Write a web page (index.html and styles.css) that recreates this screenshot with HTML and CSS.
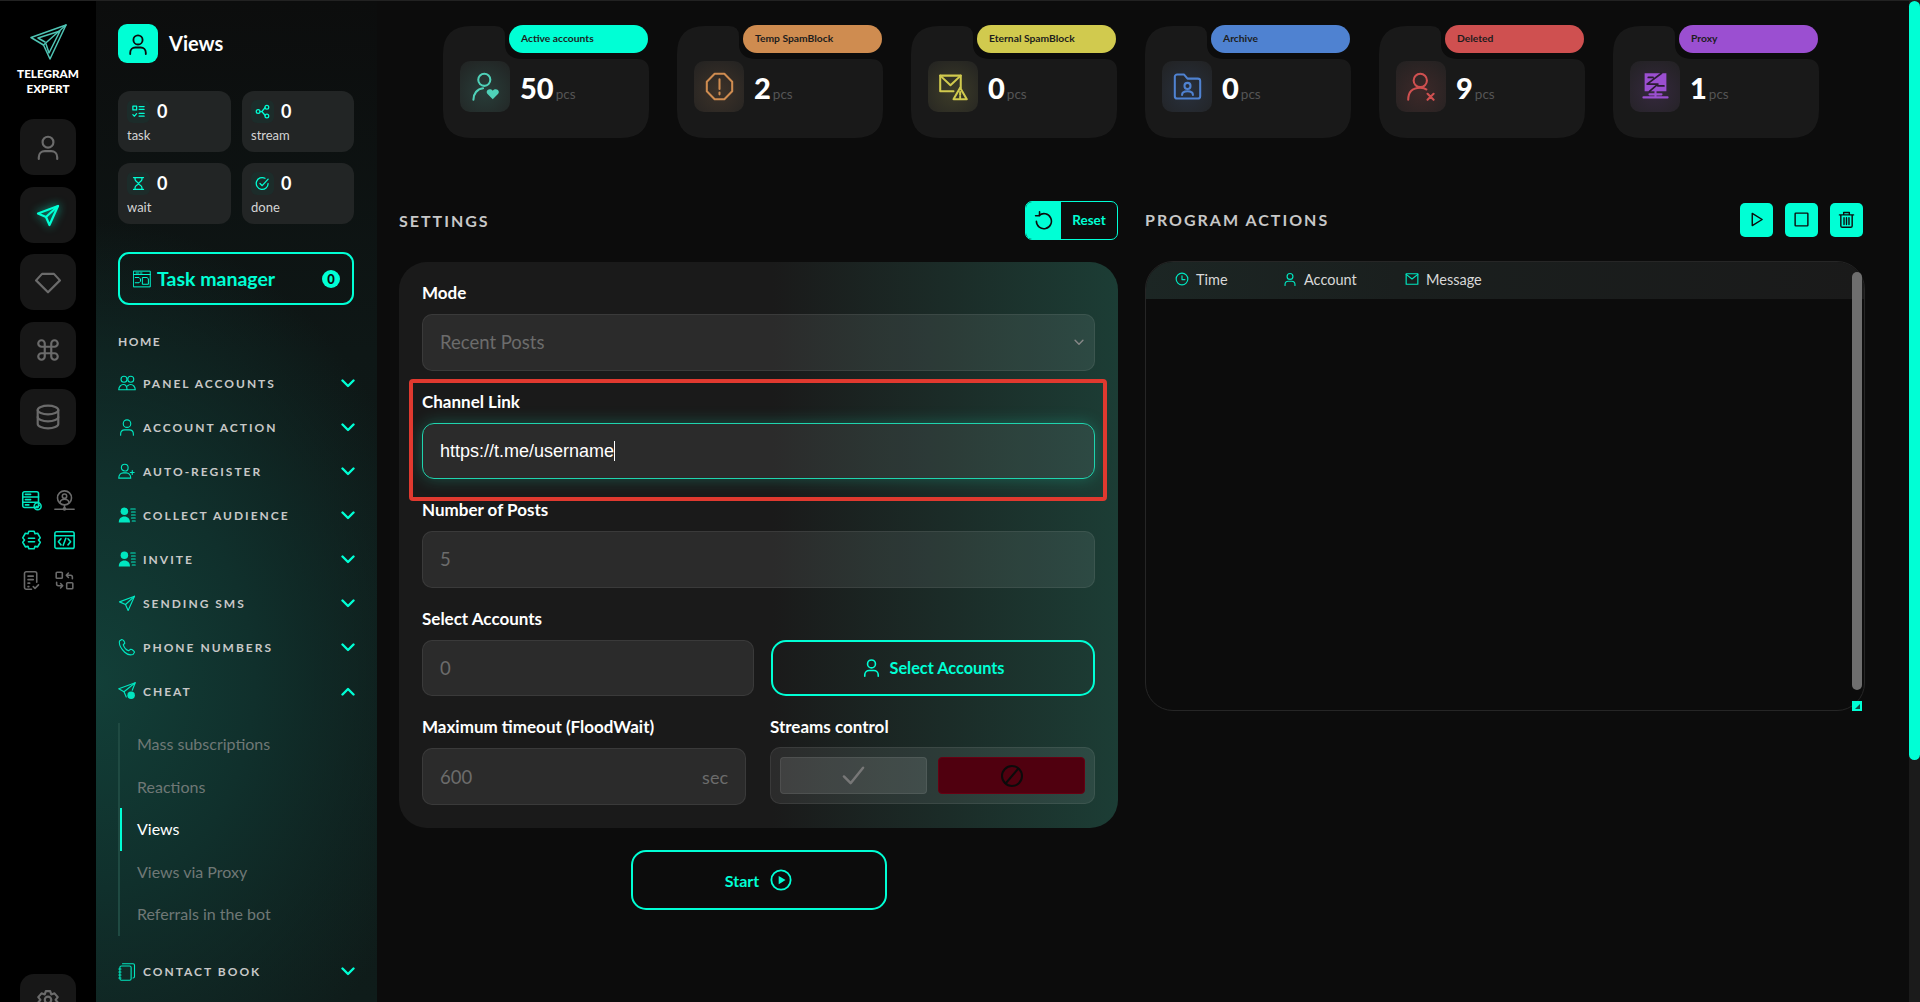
FILE: index.html
```html
<!DOCTYPE html>
<html>
  <head>
    <meta charset="utf-8">
    <title>Views</title>
    <link rel="stylesheet" href="styles.css">
  </head>
  <body>
    <svg class="sprites" xmlns="http://www.w3.org/2000/svg">
      <symbol id="i-user" viewBox="0 0 24 24"><circle cx="12" cy="7.500" r="5"/><path d="M3.500 23v-1.500C3.500 18 6 15.800 9 15.800h6c3 0 5.500 2.200 5.500 5.700V23"/></symbol>
      <symbol id="i-send" viewBox="0 0 24 24"><path d="M22 3 2 10.500l8 3.500 3.500 8L22 3Z"/><path d="M10 14 22 3"/></symbol>
      <symbol id="i-diamond" viewBox="0 0 24 24"><path d="M6.500 4.500h11L23 10.500 12 21.500 1 10.500l5.500-6Z"/></symbol>
      <symbol id="i-cmd" viewBox="0 0 24 24"><path d="M9 9h6v6H9z"/><path d="M9 9H6a3 3 0 1 1 3-3v3ZM15 9V6a3 3 0 1 1 3 3h-3ZM15 15h3a3 3 0 1 1-3 3v-3ZM9 15v3a3 3 0 1 1-3-3h3Z"/></symbol>
      <symbol id="i-db" viewBox="0 0 24 24"><ellipse cx="12" cy="5.500" rx="9.500" ry="4"/><path d="M2.500 5.500v13c0 2.200 4.300 4 9.500 4s9.500-1.800 9.500-4v-13"/><path d="M2.500 12c0 2.200 4.300 4 9.500 4s9.500-1.800 9.500-4"/></symbol>
      <symbol id="i-gear" viewBox="0 0 24 24"><path d="M10 2h4l1 3 3-1 3 3.500-2 2.500 2 2.500-3 4-3-1-1 3h-4l-1-3-3 1-3-4 2-2.500-2-2.500L6 4l3 1 1-3Z"/><circle cx="12" cy="10" r="3"/></symbol>
      <symbol id="i-server" viewBox="0 0 24 24"><rect x="2" y="2" width="18" height="18" rx="2"/><path d="M2 8h18M2 14h18M5 5h6M5 11h6M5 17h4"/><circle cx="19" cy="18.500" r="4"/><path d="m17.300 18.500 1.300 1.300 2.200-2.400"/></symbol>
      <symbol id="i-node" viewBox="0 0 24 24"><circle cx="12" cy="9" r="8"/><circle cx="12" cy="7" r="2.500"/><path d="M7 14c.5-2.500 2.500-3.500 5-3.500s4.500 1 5 3.500M12 17v4M1 22h22"/><circle cx="12" cy="21.500" r="1.200"/></symbol>
      <symbol id="i-cog" viewBox="0 0 24 24"><path d="M9 1.500h6l1 2.800 3-.6 3 5.300-2 2.500 2 2.500-3 5.300-3-.6-1 2.800H9l-1-2.800-3 .6L2 14l2-2.500-2-2.500 3-5.300 3 .6 1-2.800Z"/><path d="M8.500 9.500h7M8.500 13.500h7"/></symbol>
      <symbol id="i-code" viewBox="0 0 24 24"><rect x="1" y="2" width="22" height="19" rx="2"/><path d="M1 6.500h22M8 10 5 13.500 8 17M16 10l3 3.500-3 3.500M13.500 9.500l-3 8"/></symbol>
      <symbol id="i-doc" viewBox="0 0 24 24"><path d="M12 22H6a2 2 0 0 1-2-2V4a2 2 0 0 1 2-2h10a2 2 0 0 1 2 2v10"/><path d="M8 7h6M8 11h6M8 15h2M8 19h1M14 19l2 2 4-4"/></symbol>
      <symbol id="i-swap" viewBox="0 0 24 24"><rect x="2.500" y="2.500" width="7" height="7" rx="1"/><rect x="14.500" y="14.500" width="7" height="7" rx="1"/><path d="M14 6h5c1.500 0 2 1 2 2v2M14 6l2.500-2.500M14 6l2.500 2.500M10 18H5c-1.500 0-2-1-2-2v-2M10 18l-2.500-2.500M10 18l-2.500 2.500"/></symbol>
      <symbol id="i-tasks" viewBox="0 0 24 24"><rect x="3" y="3.500" width="6" height="6"/><path d="M13 4h8M13 8.500h8M13 15h8M13 19.500h8M3 17l2.500 2.500 3.500-4"/></symbol>
      <symbol id="i-share" viewBox="0 0 24 24"><circle cx="5" cy="12" r="3"/><circle cx="19" cy="5" r="3"/><circle cx="19" cy="19" r="3"/><path d="m8 12 3 0 5-6M11 12l5 6"/></symbol>
      <symbol id="i-hour" viewBox="0 0 24 24"><path d="M4 2.500h16M4 21.500h16M6.500 2.500v3c0 3 5.500 4.500 5.500 6.500s-5.500 3.500-5.500 6.500v3M17.500 2.500v3c0 3-5.500 4.500-5.500 6.500s5.500 3.500 5.500 6.500v3"/></symbol>
      <symbol id="i-done" viewBox="0 0 24 24"><path d="M21 12a9.500 9.500 0 1 1-5-8.400"/><path d="m8 12 3.500 3.500L21 5"/></symbol>
      <symbol id="i-taskboard" viewBox="0 0 24 24"><rect x="1" y="1.500" width="22" height="21"/><path d="M1 6h22M4 4h4M10 4h2M3 10h5l2 2v3l-2 2H3M13 10h6l1.500 2v7H13Z"/></symbol>
      <symbol id="i-group" viewBox="0 0 24 24"><circle cx="8" cy="7" r="4"/><circle cx="17" cy="7" r="4"/><path d="M1 21c0-4 3-7 6-7 3 0 5 2 5 7H1ZM12 21h11c0-4-3-7-6-7-2 0-3.500 1-4.500 2"/></symbol>
      <symbol id="i-add" viewBox="0 0 24 24"><circle cx="9" cy="7.500" r="4.500"/><path d="M1 21.500c0-4.500 3-7 6-7h4c3 0 6 2.500 6 7H1ZM19 11.500v5M16.500 14h5"/></symbol>
      <symbol id="i-list" viewBox="0 0 24 24"><circle class="solid" cx="8.500" cy="7" r="5"/><path class="solid" d="M1 22c0-5 3-8 7.500-8s7.500 3 7.500 8H1Z"/><path d="M17 4h6M18 8h5M18 12h5M18 16h5M19 20h4"/></symbol>
      <symbol id="i-phone" viewBox="0 0 24 24"><path d="M5 2 2 4c-1 5 3 11 7 15 3 3 7 4 11 3l2-3c0-1-3-4-5-4l-3 2c-3-1-6-5-7-8l2-2c0-2-2-5-4-5Z"/></symbol>
      <symbol id="i-cheat" viewBox="0 0 24 24"><path d="M23 1 1 9l7 4 3 7"/><path d="M23 1 8 13M23 1l-4 10"/><circle class="solid" cx="17.500" cy="17.500" r="5"/></symbol>
      <symbol id="i-book" viewBox="0 0 24 24"><rect x="2.500" y="4" width="15" height="19" rx="2"/><path d="M6 1h14a2 2 0 0 1 2 2v15a2 2 0 0 1-2 2M1 8h3M1 12h3M1 16h3M1 20h3"/></symbol>
      <symbol id="i-chev" viewBox="0 0 14 9"><path d="M1.500 1.500 7 7l5.500-5.500"/></symbol>
      <symbol id="i-heart" viewBox="0 0 24 24"><circle cx="11" cy="6.500" r="5"/><path d="M2 23c0-5 3-9 8-9.500"/><path class="solid" d="M18 22.500l-4.500-4.500c-2-2.500 2-5.500 4.500-2.500 2.500-3 6.500 0 4.500 2.500L18 22.500Z"/></symbol>
      <symbol id="i-warn" viewBox="0 0 24 24"><path d="M8 1.500h8l6.500 6.500v8L16 22.500H8L1.500 16V8L8 1.500Z"/><path d="M12 6v8M12 17v1.500"/></symbol>
      <symbol id="i-mail" viewBox="0 0 24 24"><path d="M18 13V3H1v13h11"/><path d="m1 3 8.500 8L18 3"/><path d="M17.500 13 12 22.500h11L17.500 13ZM17.500 16.500v2.500M17.500 20.500v.5"/></symbol>
      <symbol id="i-folder" viewBox="0 0 24 24"><path d="M1.500 4a2 2 0 0 1 2-2H9l3 3.500h8.500a2 2 0 0 1 2 2V20a2 2 0 0 1-2 2h-17a2 2 0 0 1-2-2V4Z"/><circle cx="12" cy="11.500" r="2.500"/><path d="M7.500 19c0-2 2-3 4.500-3s4.500 1 4.500 3"/></symbol>
      <symbol id="i-userx" viewBox="0 0 24 24"><circle cx="11" cy="7" r="5.500"/><path d="M1 23c0-6 3-10 10-10 2 0 4 .5 5 1.500M17 18l5 5M22 18l-5 5"/></symbol>
      <symbol id="i-proxy" viewBox="0 0 24 24"><path class="solid" d="M3 1h18v15H3V1Z"/><path class="cut" d="M6 4.500h4M14 11.500h5M17 1 5 10h9L7 16"/><path d="M2 21h20M12 16v5M7 18.500h10"/></symbol>
      <symbol id="i-reset" viewBox="0 0 24 24"><path d="M6.500 5.500A9.500 9.500 0 1 1 3 13"/><path d="M7 1v5H2"/></symbol>
      <symbol id="i-play" viewBox="0 0 24 24"><path d="M6 3.500v17L20 12 6 3.500Z"/></symbol>
      <symbol id="i-stop" viewBox="0 0 24 24"><rect x="3" y="3" width="18" height="18" rx="1"/></symbol>
      <symbol id="i-trash" viewBox="0 0 24 24"><path d="M2 5.500h20M8 5.500V2h8v3.500M4 5.500V21a2 2 0 0 0 2 2h12a2 2 0 0 0 2-2V5.500M8.500 9.500V19M12 9.500V19M15.500 9.500V19"/></symbol>
      <symbol id="i-clock" viewBox="0 0 24 24"><circle cx="12" cy="12" r="10"/><path d="M12 6.500V13h5"/></symbol>
      <symbol id="i-envelope" viewBox="0 0 24 24"><rect x="2" y="3" width="20" height="18"/><path d="m2 4 10 8 10-8"/></symbol>
      <symbol id="i-ban" viewBox="0 0 24 24"><circle cx="12" cy="12" r="10"/><path d="M18 5 6 19"/></symbol>
      <symbol id="i-check" viewBox="0 0 24 24"><path d="M2 13l7 7L22 4"/></symbol>
      <symbol id="i-start" viewBox="0 0 24 24"><circle cx="12" cy="12" r="10.500"/><path class="solid" d="M9.500 7.500v9L17 12 9.500 7.500Z"/></symbol>
    </svg>

    <aside class="rail">
      <div class="logo">
        <svg class="logo-mark" viewBox="0 0 38 36"><path d="M37 1 2 13.500 14.500 21 21 35 37 1Z"/><path d="M37 1 14.500 21"/><path d="M31 7 9 14l7 4M31 7 20 29l-3-9"/></svg>
        <div class="logo-text">TELEGRAM<br>EXPERT</div>
      </div>
      <a class="rail-btn"><svg class="icon"><use href="#i-user"/></svg></a>
      <a class="rail-btn is-active"><svg class="icon"><use href="#i-send"/></svg></a>
      <a class="rail-btn"><svg class="icon"><use href="#i-diamond"/></svg></a>
      <a class="rail-btn"><svg class="icon"><use href="#i-cmd"/></svg></a>
      <a class="rail-btn"><svg class="icon"><use href="#i-db"/></svg></a>
      <div class="rail-tools">
        <svg class="tool is-on"><use href="#i-server"/></svg>
        <svg class="tool"><use href="#i-node"/></svg>
        <svg class="tool is-on"><use href="#i-cog"/></svg>
        <svg class="tool is-on"><use href="#i-code"/></svg>
        <svg class="tool"><use href="#i-doc"/></svg>
        <svg class="tool"><use href="#i-swap"/></svg>
      </div>
      <a class="rail-btn rail-bottom"><svg class="icon"><use href="#i-gear"/></svg></a>
    </aside>

    <nav class="sidebar">
      <div class="page-head">
        <span class="page-icon"><svg><use href="#i-user"/></svg></span>
        <h1>Views</h1>
      </div>
      <div class="tiles">
        <div class="tile"><div class="tile-top"><span class="tile-icon"><svg><use href="#i-tasks"/></svg></span><b>0</b></div><span class="tile-label">task</span></div>
        <div class="tile"><div class="tile-top"><span class="tile-icon"><svg><use href="#i-share"/></svg></span><b>0</b></div><span class="tile-label">stream</span></div>
        <div class="tile"><div class="tile-top"><span class="tile-icon"><svg><use href="#i-hour"/></svg></span><b>0</b></div><span class="tile-label">wait</span></div>
        <div class="tile"><div class="tile-top"><span class="tile-icon"><svg><use href="#i-done"/></svg></span><b>0</b></div><span class="tile-label">done</span></div>
      </div>
      <a class="task-manager">
        <svg class="tm-icon"><use href="#i-taskboard"/></svg>
        <span>Task manager</span>
        <i class="tm-count">0</i>
      </a>
      <div class="home">HOME</div>
      <ul class="menu">
        <li class="menu-row"><svg class="menu-icon"><use href="#i-group"/></svg><span>PANEL ACCOUNTS</span><svg class="chev"><use href="#i-chev"/></svg></li>
        <li class="menu-row"><svg class="menu-icon"><use href="#i-user"/></svg><span>ACCOUNT ACTION</span><svg class="chev"><use href="#i-chev"/></svg></li>
        <li class="menu-row"><svg class="menu-icon"><use href="#i-add"/></svg><span>AUTO-REGISTER</span><svg class="chev"><use href="#i-chev"/></svg></li>
        <li class="menu-row"><svg class="menu-icon"><use href="#i-list"/></svg><span>COLLECT AUDIENCE</span><svg class="chev"><use href="#i-chev"/></svg></li>
        <li class="menu-row"><svg class="menu-icon"><use href="#i-list"/></svg><span>INVITE</span><svg class="chev"><use href="#i-chev"/></svg></li>
        <li class="menu-row"><svg class="menu-icon"><use href="#i-send"/></svg><span>SENDING SMS</span><svg class="chev"><use href="#i-chev"/></svg></li>
        <li class="menu-row"><svg class="menu-icon"><use href="#i-phone"/></svg><span>PHONE NUMBERS</span><svg class="chev"><use href="#i-chev"/></svg></li>
        <li class="menu-row"><svg class="menu-icon"><use href="#i-cheat"/></svg><span>CHEAT</span><svg class="chev is-open"><use href="#i-chev"/></svg></li>
        <li>
          <ul class="submenu">
            <li>Mass subscriptions</li>
            <li>Reactions</li>
            <li class="is-current">Views</li>
            <li>Views via Proxy</li>
            <li>Referrals in the bot</li>
          </ul>
        </li>
        <li class="menu-row"><svg class="menu-icon"><use href="#i-book"/></svg><span>CONTACT BOOK</span><svg class="chev"><use href="#i-chev"/></svg></li>
      </ul>
    </nav>

    <main class="main">
      <section class="stats">
        <div class="stat c-green"><div class="stat-bg"></div><span class="stat-tag">Active accounts</span><div class="stat-body"><span class="stat-icon"><svg><use href="#i-heart"/></svg></span><b>50</b><small>pcs</small></div></div>
        <div class="stat c-orange"><div class="stat-bg"></div><span class="stat-tag">Temp SpamBlock</span><div class="stat-body"><span class="stat-icon"><svg><use href="#i-warn"/></svg></span><b>2</b><small>pcs</small></div></div>
        <div class="stat c-yellow"><div class="stat-bg"></div><span class="stat-tag">Eternal SpamBlock</span><div class="stat-body"><span class="stat-icon"><svg><use href="#i-mail"/></svg></span><b>0</b><small>pcs</small></div></div>
        <div class="stat c-blue"><div class="stat-bg"></div><span class="stat-tag">Archive</span><div class="stat-body"><span class="stat-icon"><svg><use href="#i-folder"/></svg></span><b>0</b><small>pcs</small></div></div>
        <div class="stat c-red"><div class="stat-bg"></div><span class="stat-tag">Deleted</span><div class="stat-body"><span class="stat-icon"><svg><use href="#i-userx"/></svg></span><b>9</b><small>pcs</small></div></div>
        <div class="stat c-purple"><div class="stat-bg"></div><span class="stat-tag">Proxy</span><div class="stat-body"><span class="stat-icon"><svg><use href="#i-proxy"/></svg></span><b>1</b><small>pcs</small></div></div>
      </section>

      <div class="columns">
        <section class="settings">
          <header class="col-head">
            <h2>SETTINGS</h2>
            <a class="reset"><span class="reset-icon"><svg><use href="#i-reset"/></svg></span><span class="reset-text">Reset</span></a>
          </header>
          <div class="panel">
            <div class="annotation"></div>
            <label>Mode</label>
            <div class="field field-select"><span>Recent Posts</span><svg class="select-chev"><use href="#i-chev"/></svg></div>
            <label>Channel Link</label>
            <div class="field field-focus"><span class="typed">https://t.me/username</span></div>
            <label>Number of Posts</label>
            <div class="field"><span>5</span></div>
            <label>Select Accounts</label>
            <div class="pair pair-accounts">
              <div class="field"><span>0</span></div>
              <a class="select-btn"><svg><use href="#i-user"/></svg>Select Accounts</a>
            </div>
            <div class="pair pair-last">
              <div class="pair-col">
                <label>Maximum timeout (FloodWait)</label>
                <div class="field field-unit"><span>600</span><em>sec</em></div>
              </div>
              <div class="pair-col">
                <label>Streams control</label>
                <div class="streams">
                  <span class="stream-on"><svg><use href="#i-check"/></svg></span>
                  <span class="stream-off"><svg><use href="#i-ban"/></svg></span>
                </div>
              </div>
            </div>
          </div>
          <a class="start">Start <svg><use href="#i-start"/></svg></a>
        </section>

        <section class="actions">
          <header class="col-head">
            <h2>PROGRAM ACTIONS</h2>
            <div class="action-btns">
              <a><svg><use href="#i-play"/></svg></a>
              <a><svg><use href="#i-stop"/></svg></a>
              <a><svg><use href="#i-trash"/></svg></a>
            </div>
          </header>
          <div class="log">
            <div class="log-head">
              <span class="log-col col-time"><svg><use href="#i-clock"/></svg>Time</span>
              <span class="log-col col-account"><svg><use href="#i-user"/></svg>Account</span>
              <span class="log-col"><svg><use href="#i-envelope"/></svg>Message</span>
            </div>
            <div class="log-scroll"></div>
            <div class="log-resize"></div>
          </div>
        </section>
      </div>
    </main>

    <div class="page-scroll"><div class="page-thumb"></div></div>
  </body>
</html>
```

FILE: styles.css
```css
* {
    box-sizing: border-box;
}
html, body {
    height: 100%;
}
body {
    margin: 0;
    height: 1002px;
    overflow: hidden;
    display: flex;
    background: #0c0c0c;
    border-top: 1px solid #222;
    font-family: "Lato", sans-serif;
    color: #fff;
}
ul {
    list-style: none;
    margin: 0;
    padding: 0;
}
.sprites {
    display: none;
}
svg {
    fill: none;
    stroke: currentColor;
    stroke-width: 2;
    stroke-linecap: round;
    stroke-linejoin: round;
    overflow: visible;
}
.solid {
    fill: currentColor;
    stroke: none;
}
.cut {
    stroke: #2a1c33;
    stroke-width: 1.400;
}

/* left rail */
.rail {
    width: 96px;
    flex: none;
    overflow: hidden;
    background: #000;
    display: flex;
    flex-direction: column;
    align-items: center;
    padding-top: 23px;
}
.logo {
    flex: none;
    text-align: center;
    height: 95px;
}
.logo-mark {
    width: 38px;
    height: 36px;
    display: block;
    margin: 0 auto 6px;
    color: #4fc4b4;
    stroke-width: 1.500;
}
.logo-text {
    font-size: 11.700px;
    line-height: 15px;
    font-weight: 900;
}
.rail-btn {
    width: 56px;
    height: 56px;
    flex: none;
    margin-bottom: 11.500px;
    border-radius: 14px;
    background: #171717;
    color: #6b6b6b;
    display: flex;
    align-items: center;
    justify-content: center;
}
.rail-btn .icon {
    width: 26px;
    height: 26px;
}
.rail-btn.is-active {
    color: #00ffd5;
}
.rail-btn.is-active .icon {
    width: 24px;
    height: 24px;
    stroke-width: 2.200;
    filter: drop-shadow(0 0 5px rgba(0, 255, 213, .7));
}
.rail-tools {
    flex: none;
    display: grid;
    grid-template-columns: 21px 22px;
    column-gap: 12px;
    row-gap: 19px;
    margin-top: 33px;
}
.tool {
    width: 21px;
    height: 21px;
    color: #6b6b6b;
    stroke-width: 1.800;
}
.tool.is-on {
    color: #00e6c0;
}
.rail-bottom {
    margin-top: 383px;
}

/* sidebar */
.sidebar {
    width: 281px;
    flex: none;
    padding: 23px 23px 0 22px;
    background:
        radial-gradient(ellipse 125% 46% at 0% 68%, #123f38 0%, #10302c 45%, rgba(15, 28, 26, 0) 100%),
        linear-gradient(180deg, #0c0d0d 0%, #0e1716 35%, #0f1c1a 100%);
}
.page-head {
    display: flex;
    align-items: center;
    gap: 11px;
}
.page-icon {
    width: 40px;
    height: 39px;
    border-radius: 9px;
    background: #00ffd5;
    color: #0c0c0c;
    display: flex;
    align-items: center;
    justify-content: center;
}
.page-icon svg {
    width: 22px;
    height: 22px;
}
h1 {
    margin: 0 0 2px;
    font-size: 20px;
    font-weight: 700;
}
.tiles {
    display: grid;
    grid-template-columns: 113px 112px;
    gap: 11px;
    margin-top: 28px;
}
.tile {
    height: 61px;
    border-radius: 12px;
    background: #222525;
    padding: 9px;
}
.tile-top {
    display: flex;
    align-items: center;
    gap: 7px;
    height: 23px;
}
.tile-top b {
    margin-top: -2px;
    font-size: 18px;
    font-weight: 700;
}
.tile-icon {
    width: 23px;
    height: 23px;
    border-radius: 6px;
    background: #1c2c2a;
    color: #00ffd5;
    display: flex;
    align-items: center;
    justify-content: center;
}
.tile-icon svg {
    width: 15px;
    height: 15px;
    stroke-width: 2;
}
.tile-label {
    display: block;
    margin-top: 4px;
    font-size: 13px;
    line-height: 17px;
    color: #d4d4d4;
}
.task-manager {
    display: flex;
    align-items: center;
    height: 53px;
    margin-top: 28px;
    padding: 0 12px 0 13px;
    border: 2px solid #00ffd5;
    border-radius: 11px;
    color: #00ffd5;
    font-size: 19.500px;
    font-weight: 700;
}
.tm-icon {
    width: 18px;
    height: 18px;
    margin-right: 6px;
    stroke-width: 1.300;
}
.tm-count {
    margin-left: auto;
    width: 18px;
    height: 18px;
    border-radius: 50%;
    background: #00ffd5;
    color: #0c0c0c;
    font-size: 13px;
    font-style: normal;
    font-weight: 900;
    line-height: 18px;
    text-align: center;
}
.home {
    margin-top: 25px;
    line-height: 24px;
    font-size: 12px;
    font-weight: 700;
    letter-spacing: 1.500px;
    color: #c8c8c8;
}
.menu {
    margin-top: 7px;
}
.menu-row {
    height: 44px;
    display: flex;
    align-items: center;
    font-size: 12px;
    font-weight: 700;
    letter-spacing: 2px;
    color: #c8c8c8;
}
.menu-icon {
    width: 18px;
    height: 18px;
    margin-right: 7px;
    color: #00e6c0;
    stroke-width: 1.500;
}
.chev {
    width: 14px;
    height: 9px;
    margin: 0 -1px 0 auto;
    color: #00ffd5;
    stroke-width: 2.400;
}
.chev.is-open {
    transform: rotate(180deg);
}
.submenu {
    margin: 10px 0 14px;
    border-left: 2px solid #1f4a42;
    font-size: 16px;
    color: #6f7876;
}
.submenu li {
    height: 42.600px;
    line-height: 42.600px;
    padding-left: 17px;
    position: relative;
}
.submenu .is-current {
    color: #fff;
}
.submenu .is-current::before {
    content: "";
    position: absolute;
    left: 0;
    top: 0;
    bottom: 0;
    width: 2px;
    background: #00ffd5;
}

/* main area */
.main {
    flex: 1;
    min-width: 0;
    padding: 25px 0 0 22px;
}
.stats {
    display: flex;
    gap: 28px;
    padding-left: 44px;
}
.stat {
    --c: #00ffd5;
    --ic: #4fd1b8;
    position: relative;
    width: 206px;
    height: 112px;
    flex: none;
}
.stat-bg {
    position: absolute;
    inset: 0;
    background: #191919;
    clip-path: path("M28 0H52Q62 0 62 10V18Q62 33 80 33H194Q206 33 206 45V84Q206 112 178 112H28Q0 112 0 84V28Q0 0 28 0Z");
}
.c-orange { --c: #cf8c50; --ic: #cf8c50; }
.c-yellow { --c: #d1ca4e; --ic: #d1ca4e; }
.c-blue { --c: #4f82d1; --ic: #4f82d1; }
.c-red { --c: #cf5050; --ic: #cf5050; }
.c-purple { --c: #9b4fd1; --ic: #9b4fd1; }
.stat-tag {
    position: absolute;
    left: 66px;
    right: 1px;
    top: -1px;
    height: 28px;
    border-radius: 14px;
    background: var(--c);
    color: #1d1d1d;
    font-size: 10.300px;
    font-weight: 700;
    line-height: 26px;
    padding-left: 12px;
}
.stat-body {
    position: relative;
    display: flex;
    align-items: center;
    padding: 35px 0 0 17px;
}
.stat-icon {
    position: relative;
    width: 50px;
    height: 51px;
    margin-right: 10px;
    border-radius: 10px;
    background: #212121;
    overflow: hidden;
    color: var(--ic);
    display: flex;
    align-items: center;
    justify-content: center;
}
.stat-icon::before {
    content: "";
    position: absolute;
    inset: 0;
    background: radial-gradient(circle at 50% 60%, var(--ic), transparent 105%);
    opacity: .16;
}
.stat-icon svg {
    position: relative;
    width: 29px;
    height: 29px;
    stroke-width: 1.700;
}
.stat-body b {
    margin-top: 2px;
    font-size: 29px;
    font-weight: 900;
}
.stat-body small {
    margin: 14px 0 0 2px;
    font-size: 13.500px;
    color: #555;
}
.columns {
    display: flex;
    gap: 27px;
    margin-top: 63px;
}
.settings {
    width: 719px;
    flex: none;
}
.actions {
    width: 720px;
    flex: none;
}
.col-head {
    height: 39px;
    margin-bottom: 22px;
    display: flex;
    align-items: center;
    justify-content: space-between;
}
.actions .col-head {
    margin-bottom: 21px;
}
.actions h2 {
    margin-top: -2px;
}
h2 {
    margin: 0;
    font-size: 16px;
    font-weight: 700;
    letter-spacing: 2px;
    color: #c8c8c8;
}
.reset {
    display: flex;
    width: 93px;
    height: 39px;
    border: 1px solid #00ffd5;
    border-radius: 7px;
    overflow: hidden;
}
.reset-icon {
    width: 35px;
    background: #00ffd5;
    color: #0c0c0c;
    display: flex;
    align-items: center;
    justify-content: center;
}
.reset-icon svg {
    width: 19px;
    height: 19px;
}
.reset-text {
    flex: 1;
    text-align: center;
    font-size: 13.500px;
    font-weight: 700;
    line-height: 37px;
    color: #00ffd5;
}
.panel {
    position: relative;
    height: 566px;
    padding: 20px 23px;
    border-radius: 28px;
    background: linear-gradient(90deg, #1a1a1a 0%, #1a1a1a 52%, #1c3d35 100%);
}
.annotation {
    position: absolute;
    left: 10px;
    top: 117px;
    width: 698px;
    height: 122px;
    border: 4px solid #e0392f;
    border-radius: 4px;
    pointer-events: none;
}
label {
    display: block;
    height: 22px;
    line-height: 22px;
    margin-bottom: 10px;
    font-size: 17px;
    font-weight: 700;
}
.field {
    height: 56.600px;
    margin-bottom: 20px;
    padding: 0 17px;
    display: flex;
    align-items: center;
    border: 1px solid rgba(255, 255, 255, .07);
    border-radius: 10px;
    background: rgba(255, 255, 255, .08);
    font-size: 18.500px;
    color: #6c6c6c;
}
.field-select {
    justify-content: space-between;
}
.select-chev {
    width: 10px;
    height: 7px;
    margin-right: -7px;
    color: #888;
}
.field-focus {
    border: 1px solid #1fd4ae;
    border-radius: 12px;
    box-shadow: 0 0 16px rgba(31, 212, 174, .3);
    color: #fff;
}
.typed {
    font-family: "Liberation Sans", sans-serif;
    font-size: 18px;
    border-right: 1px solid #fff;
    line-height: 20px;
}
.pair {
    display: flex;
    justify-content: space-between;
}
.pair-accounts .field {
    width: 332px;
}
.select-btn {
    width: 324px;
    height: 56.600px;
    padding-bottom: 2px;
    border: 2px solid #00ffd5;
    border-radius: 15px;
    color: #00ffd5;
    font-size: 16.300px;
    font-weight: 700;
    display: flex;
    align-items: center;
    justify-content: center;
    gap: 9px;
}
.select-btn svg {
    width: 19px;
    height: 19px;
}
.pair-col {
    width: 324px;
}
.pair-col + .pair-col {
    width: 325px;
}
.pair-last .field {
    margin-bottom: 0;
}
.field-unit {
    justify-content: space-between;
}
.field-unit em {
    font-style: normal;
    font-size: 18px;
}
.streams {
    height: 57px;
    margin-top: -1px;
    padding: 9px 9px;
    display: flex;
    gap: 11px;
    border: 1px solid rgba(255, 255, 255, .07);
    border-radius: 10px;
    background: rgba(255, 255, 255, .08);
}
.streams span {
    flex: 1;
    border-radius: 4px;
    display: flex;
    align-items: center;
    justify-content: center;
}
.stream-on {
    background: rgba(255, 255, 255, .1);
    border: 1px solid rgba(255, 255, 255, .08);
    color: #777;
}
.stream-on svg {
    width: 23px;
    height: 23px;
    stroke-width: 2.600;
}
.stream-off {
    background: #50000f;
    border: 1px solid #660012;
    color: #0b0b0b;
}
.stream-off svg {
    width: 24px;
    height: 24px;
}
.start {
    width: 256px;
    height: 60px;
    margin: 22px auto 0;
    border: 2px solid #00ffd5;
    border-radius: 15px;
    color: #00ffd5;
    font-size: 16px;
    font-weight: 700;
    display: flex;
    align-items: center;
    justify-content: center;
    gap: 11px;
}
.start svg {
    width: 22px;
    height: 22px;
}
.action-btns {
    display: flex;
    gap: 12px;
    margin: -2px 2px 0 0;
}
.action-btns a {
    width: 33px;
    height: 34px;
    border-radius: 5px;
    background: #00ffd5;
    color: #0c0c0c;
    display: flex;
    align-items: center;
    justify-content: center;
}
.action-btns svg {
    width: 17px;
    height: 17px;
}
.log {
    position: relative;
    height: 450px;
    border: 1px solid #262626;
    border-radius: 28px;
}
.log-head {
    height: 37px;
    padding: 0 0 3px 29px;
    display: flex;
    align-items: center;
    border-radius: 27px 27px 0 0;
    background: linear-gradient(90deg, #1c2624 0%, #1a1f1e 35%, #1a1a1a 100%);
    font-size: 14.500px;
    color: #d8d8d8;
}
.log-col {
    display: flex;
    align-items: center;
    gap: 7px;
}
.log-col svg {
    width: 14px;
    height: 14px;
    color: #00e6c0;
    stroke-width: 2;
}
.col-time {
    width: 108px;
}
.col-account {
    width: 122px;
}
.log-scroll {
    position: absolute;
    right: 2px;
    top: 10px;
    width: 10px;
    height: 418px;
    border-radius: 5px;
    background: #6e6e6e;
}
.log-resize {
    position: absolute;
    right: 2px;
    bottom: -1px;
    width: 10px;
    height: 10px;
    background: #00ffd5;
}
.log-resize::after {
    content: "";
    position: absolute;
    right: 2px;
    bottom: 2px;
    border-style: solid;
    border-width: 0 0 5px 5px;
    border-color: transparent transparent #0c4d42 transparent;
}
.page-scroll {
    width: 11px;
    flex: none;
    background: #1b1b1b;
}
.page-thumb {
    height: 759px;
    border-radius: 6px;
    background: #00ffd5;
}
```
